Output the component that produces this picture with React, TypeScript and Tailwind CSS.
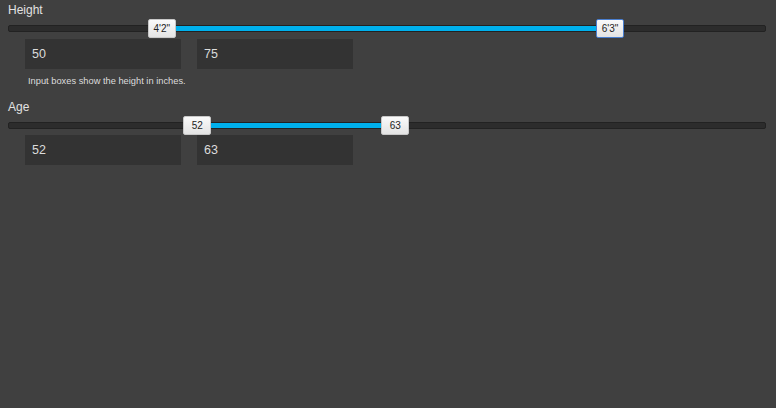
import React from 'react'

type SliderProps = {
  lo: number
  hi: number
  loLabel: string
  hiLabel: string
  focusHi?: boolean
}

// positions are in percent of the track width
function RangeSlider({ lo, hi, loLabel, hiLabel, focusHi }: SliderProps) {
  return (
    <div className="relative h-[7px] rounded-[2px] border border-[#222] bg-[#2c2c2c]">
      <div
        className="absolute top-0 bottom-0 bg-[#00b0ec]"
        style={{ left: `${lo}%`, width: `${hi - lo}%` }}
      />
      <div
        className="absolute top-[-7px] ml-[-14px] flex h-[19px] w-[28px] items-center justify-center rounded-[2px] border border-[#c8c8c8] bg-gradient-to-b from-[#fafafa] to-[#e4e4e4] text-[10px] text-[#222]"
        style={{ left: `${lo}%` }}
      >
        {loLabel}
      </div>
      <div
        className={`absolute top-[-7px] ml-[-14px] flex h-[19px] w-[28px] items-center justify-center rounded-[2px] border bg-gradient-to-b from-[#fafafa] to-[#e4e4e4] text-[10px] text-[#222] ${focusHi ? 'border-[#4a7fd0]' : 'border-[#c8c8c8]'}`}
        style={{ left: `${hi}%` }}
      >
        {hiLabel}
      </div>
    </div>
  )
}

function ValueBox({ value }: { value: string }) {
  return (
    <div className="flex h-[30px] w-[156px] items-center bg-[#333333] pl-[7px] text-[12.5px] text-[#dcdcdc]">
      {value}
    </div>
  )
}

export default function App() {
  return (
    <main className="min-h-screen bg-[#404040] pl-2 pr-[10px] pt-[3px] font-['Liberation_Sans',Arial,sans-serif]">
      <div className="h-[14px] text-[12px] leading-[14px] text-[#e2e2e2]">Height</div>
      <div className="mt-[8px]">
        <RangeSlider lo={20.2} hi={79.5} loLabel={`4'2"`} hiLabel={`6'3"`} focusHi />
      </div>
      <div className="mt-[7px] ml-[17px] flex gap-[16px]">
        <ValueBox value="50" />
        <ValueBox value="75" />
      </div>
      <p className="mt-[7px] ml-[20px] text-[9.3px] leading-[11px] text-[#dcdcdc]">
        Input boxes show the height in inches.
      </p>
      <div className="mt-[13px] h-[14px] text-[12px] leading-[14px] text-[#e2e2e2]">Age</div>
      <div className="mt-[8px]">
        <RangeSlider lo={24.9} hi={51.1} loLabel="52" hiLabel="63" />
      </div>
      <div className="mt-[6px] ml-[17px] flex gap-[16px]">
        <ValueBox value="52" />
        <ValueBox value="63" />
      </div>
    </main>
  )
}
